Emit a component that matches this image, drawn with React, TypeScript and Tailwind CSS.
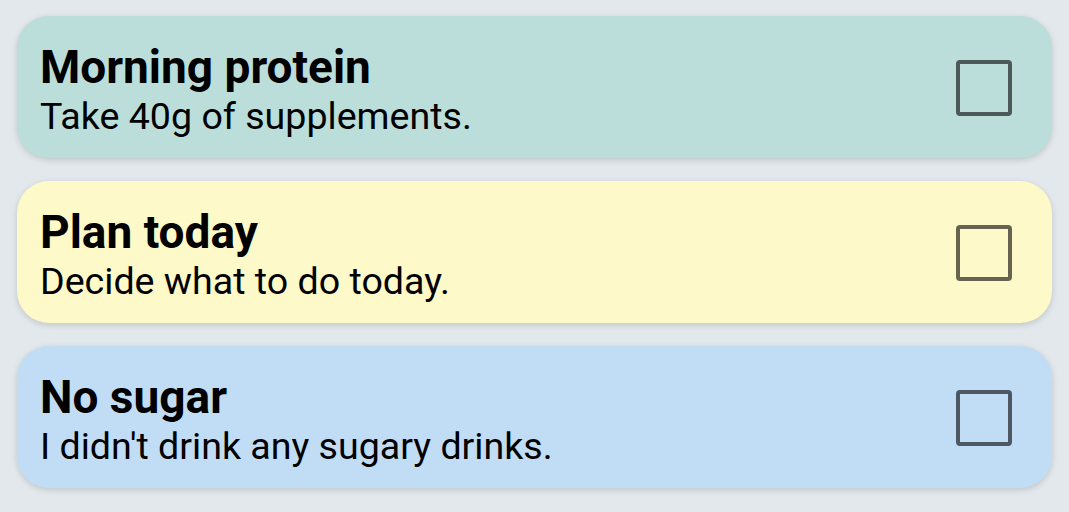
import { useState } from "react"

type Habit = {
  id: number
  title: string
  note: string
  bg: string
}

const habits: Habit[] = [
  { id: 1, title: "Morning protein", note: "Take 40g of supplements.", bg: "bg-[#bbdedb]" },
  { id: 2, title: "Plan today", note: "Decide what to do today.", bg: "bg-[#fef9c8]" },
  { id: 3, title: "No sugar", note: "I didn't drink any sugary drinks.", bg: "bg-[#c1ddf6]" },
]

export default function App() {
  const [done, setDone] = useState<Record<number, boolean>>({})

  return (
    <div className="min-h-screen bg-[#e2e8eb] px-[17px] pt-[16px] pb-6 font-['Roboto',sans-serif]">
      <div className="flex flex-col gap-[23px]">
        {habits.map((h) => (
          <div
            key={h.id}
            className={`${h.bg} h-[142px] rounded-[32px] flex items-center justify-between pl-[23px] pr-[40px] shadow-[0_2px_6px_rgba(0,0,0,0.15)]`}
          >
            <div className="text-black pt-[4px]">
              <p className="text-[46px] font-bold leading-[53px]">{h.title}</p>
              <p className="text-[37.6px] leading-[44px]">{h.note}</p>
            </div>

            <button
              onClick={() => setDone({ ...done, [h.id]: !done[h.id] })}
              className="w-[56px] h-[56px] mt-[2px] rounded-[4px] border-[4px] border-black/60 flex items-center justify-center"
            >
              {done[h.id] && (
                <svg viewBox="0 0 24 24" className="w-10 h-10" fill="none" stroke="currentColor" strokeWidth="3">
                  <path d="M5 12l5 5 9-10" />
                </svg>
              )}
            </button>
          </div>
        ))}
      </div>
    </div>
  )
}
